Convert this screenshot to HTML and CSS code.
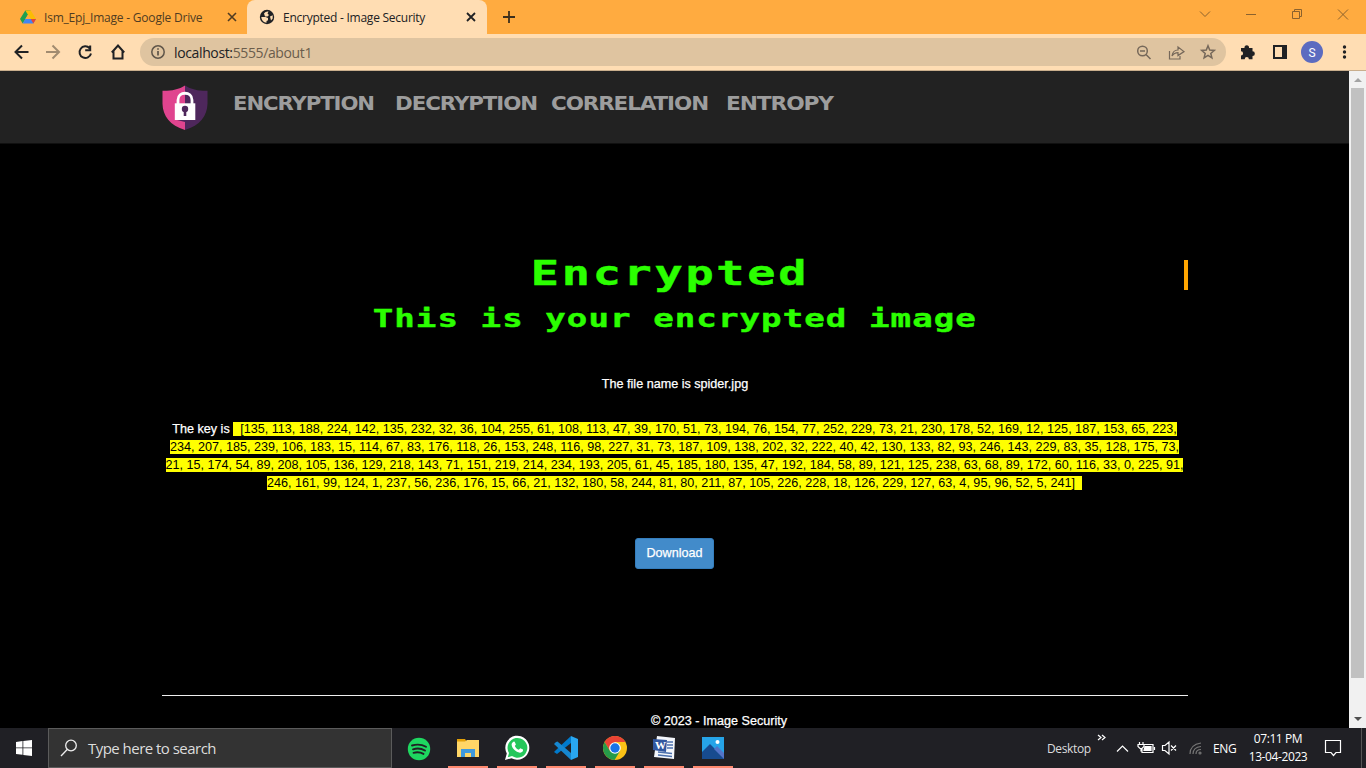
FILE: index.html
```
<!DOCTYPE html>
<html lang="en">
<head>
<meta charset="utf-8">
<title>Encrypted - Image Security</title>
<link rel="stylesheet" href="styles.css">
</head>
<body>
<div class="screen">
<header class="tabs">
  <div class="tab tab-drive">
    <svg class="fav" width="16" height="16" viewBox="0 0 16 16"><path d="M5.300 1.500h5.300L5.400 10.200 2.700 14.500 0 10z" fill="#1fa050"/><path d="M5.300 1.500h5.400L16 10h-5.300z" fill="#fbbc04"/><path d="M5.300 10H16l-2.700 4.500H2.700z" fill="#4285f4"/><path d="M10.700 10H16l-2.700 4.500z" fill="#ea4335"/><path d="M8 5.600 5.300 10h5.400z" fill="#ffab40"/></svg>
    <span class="t1">Ism_Epj_Image - Google Drive</span>
    <svg class="x" width="10" height="10" viewBox="0 0 10 10"><path d="M1 1l8 8M9 1 1 9" stroke="#503c22" stroke-width="1.6"/></svg>
  </div>
  <div class="tab tab-active">
    <svg class="fav" width="16" height="16" viewBox="0 0 16 16"><circle cx="8" cy="8" r="7.200" fill="#202124"/><path d="M5 4.500C6 3 7.500 2.300 9.500 2.500L8.500 4.500 10 6 8.500 7.500H6zM2.300 8h4.200l2.500 1v2.200l-1.500.8v1.800C4.800 13.500 2.500 11.200 2.300 8zM11 7.500l2.700-1.200v3.200L12 11.500z" fill="#ffddb3"/></svg>
    <span class="t2">Encrypted - Image Security</span>
    <svg class="x" width="10" height="10" viewBox="0 0 10 10"><path d="M1 1l8 8M9 1 1 9" stroke="#202124" stroke-width="1.8"/></svg>
  </div>
  <svg class="plus" width="12" height="12" viewBox="0 0 12 12"><path d="M6 0v12M0 6h12" stroke="#3d2f1c" stroke-width="1.8"/></svg>
  <svg class="wins" width="160" height="30" viewBox="0 0 160 30" fill="none" stroke="#8b622e"><path d="M6 9.500l5 5 5-5M52 12.500h10M98.500 9.500h7v7h-7zM100.500 9.500v-2h7v7h-2M144 7.500l10 10M154 7.500l-10 10"/></svg>
</header>
<div class="toolbar">
  <svg class="navicons" width="140" height="36" viewBox="0 0 140 36" fill="none" stroke="#202124" stroke-width="2"><path d="M28.500 18H16M22 11.500 15.500 18l6.500 6.500"/><path stroke="#a18b70" d="M46 18h12.500M52.500 11.500 59 18l-6.500 6.500"/><path d="M89.600 14.200A5.800 5.800 0 1 0 91 19.500M90.200 11.500v4.700h-5"/><path d="M107.800 18.500 114 11.600l6.200 6.900M109.500 17v7.500h9V17" transform="translate(4 0)"/></svg>
  <div class="url">
    <svg width="14" height="14" viewBox="0 0 14 14" fill="none" stroke="#5f5549"><circle cx="7" cy="7" r="6.200" stroke-width="1.500"/><path d="M7 6v4.500M7 3.300v1.500" stroke-width="1.700"/></svg>
    <span class="address"><b>localhost:</b>5555/about1</span>
    <svg class="right-icons" width="86" height="28" viewBox="0 0 86 28" fill="none" stroke="#76685a" stroke-width="1.500"><circle cx="10.500" cy="13" r="4.800"/><path d="M14 16.500l4.500 4.500M8 13h5"/><path stroke-width="1.200" d="M37.500 13v8h10.500v-3M40 18c.6-4.400 3-6 6-6V9l6 4.600-6 4v-3c-2.500 0-4.300.8-6 3.400z"/><path d="M76 7.800l1.700 4.300 4.600.3-3.500 3 1.100 4.500-3.900-2.500-3.900 2.500 1.100-4.500-3.500-3 4.600-.3z"/></svg>
  </div>
  <svg class="ext" width="140" height="36" viewBox="0 0 140 36"><path d="M15 14h3.500a2.300 2.300 0 1 1 4.500 0h3.500v3.300a2.300 2.300 0 1 1 0 4.700v3.200h-3.600a2.100 2.100 0 0 0-4.200 0H15v-3.700a2 2 0 0 0 0-4.200z" fill="#202124"/><path d="M48 12h12v12H48z" fill="#ffddb3" stroke="#202124" stroke-width="2"/><path d="M56 11h5v14h-5z" fill="#202124"/><circle cx="86" cy="18" r="11" fill="#5c6bc0"/><text x="86" y="22.500" text-anchor="middle" font-family="Roboto" font-size="12" fill="#fff">S</text><g fill="#202124"><circle cx="118.500" cy="13" r="1.700"/><circle cx="118.500" cy="18" r="1.700"/><circle cx="118.500" cy="23" r="1.700"/></g></svg>
</div>
<div class="viewport">
  <div class="page">
    <nav class="navbar">
      <svg class="shield" width="46" height="46" viewBox="0 0 46 46"><path d="M23 .5C17 4.500 9 6 .5 5.800v13C.8 31 8 40.500 23 45z" fill="#e0448f"/><path d="M23 .5c6 4 14 5.500 22.500 5.300v13C45.200 31 38 40.500 23 45z" fill="#4e275c"/><path d="M15 35l8 2v-2z" fill="#4e275c"/><path d="M16 19v-4c0-9 14-9 14 0v4" fill="none" stroke="#fff" stroke-width="2.800"/><path d="M12.800 18.300h20.500v16.700H12.800z" fill="#fff"/><circle cx="23" cy="24" r="3.200" fill="#4e275c"/><path d="M21.700 26h2.600v5h-2.600z" fill="#4e275c"/></svg>
      <svg class="links" width="610" height="30" viewBox="0 0 610 30"><text x="1" y="21" textLength="141" lengthAdjust="spacingAndGlyphs">ENCRYPTION</text><text x="163" y="21" textLength="142" lengthAdjust="spacingAndGlyphs">DECRYPTION</text><text x="319" y="21" textLength="157" lengthAdjust="spacingAndGlyphs">CORRELATION</text><text x="494" y="21" textLength="107" lengthAdjust="spacingAndGlyphs">ENTROPY</text></svg>
    </nav>
    <main class="content">
      <div class="titlebox"><h1><span>Encrypted</span></h1></div>
      <h2><span>This is your encrypted image</span></h2>
      <p class="file">The file name is spider.jpg</p>
      <p class="key"><span class="l1"><b>The key is</b> <mark>&nbsp;&nbsp;[135, 113, 188, 224, 142, 135, 232, 32, 36, 104, 255, 61, 108, 113, 47, 39, 170, 51, 73, 194, 76, 154, 77, 252, 229, 73, 21, 230, 178, 52, 169, 12, 125, 187, 153, 65, 223,</mark></span><span class="l2"><mark>234, 207, 185, 239, 106, 183, 15, 114, 67, 83, 176, 118, 26, 153, 248, 116, 98, 227, 31, 73, 187, 109, 138, 202, 32, 222, 40, 42, 130, 133, 82, 93, 246, 143, 229, 83, 35, 128, 175, 73,</mark></span><span class="l3"><mark>21, 15, 174, 54, 89, 208, 105, 136, 129, 218, 143, 71, 151, 219, 214, 234, 193, 205, 61, 45, 185, 180, 135, 47, 192, 184, 58, 89, 121, 125, 238, 63, 68, 89, 172, 60, 116, 33, 0, 225, 91,</mark></span><span class="l4"><mark>246, 161, 99, 124, 1, 237, 56, 236, 176, 15, 66, 21, 132, 180, 58, 244, 81, 80, 211, 87, 105, 226, 228, 18, 126, 229, 127, 63, 4, 95, 96, 52, 5, 241]&nbsp;&nbsp;</mark></span></p>
      <a class="btn">Download</a>
      <footer class="foot">© 2023 - Image Security</footer>
    </main>
  </div>
  <div class="scroll"><i class="up"></i><div class="thumb"></div><i class="down"></i></div>
</div>
<div class="taskbar">
  <div class="start"><svg width="16" height="16" viewBox="0 0 16 16" fill="#fff"><path d="M0 2l6.500-.9v6.400H0zM7.300 1 16 0v7.500H7.300zM0 8.300h6.500v6.500L0 14zM7.300 8.300H16V16l-8.700-1z"/></svg></div>
  <div class="search"><svg width="18" height="18" viewBox="0 0 18 18" fill="none" stroke="#eee" stroke-width="1.300"><circle cx="11" cy="6.500" r="5.300"/><path d="M7.200 10.500 1 17"/></svg><span>Type here to search</span></div>
  <div class="apps">
    <div class="app idle"><svg width="24" height="24" viewBox="0 0 24 24"><circle cx="12" cy="12" r="11.200" fill="#1ed760"/><path d="M5 8.500c5-1.500 10-1 14 1.300M6 12.300c4-1.200 8.500-.8 12 1.200M6.500 15.800c3.500-.9 7-.6 10 1.100" fill="none" stroke="#202124" stroke-width="1.900" stroke-linecap="round"/></svg></div>
    <div class="app"><svg width="24" height="24" viewBox="0 0 24 24"><path d="M1 3h8l2 3H1z" fill="#e3a008"/><path d="M1 5.500h8L11 4h12v17H1z" fill="#ffd667"/><path d="M5 21v-8h14v8h-4v-4H9v4z" fill="#3f99dc"/></svg></div>
    <div class="app"><svg width="26" height="26" viewBox="0 0 26 26"><path d="M1 25l1.800-6.500A12 12 0 1 1 7.500 23.200z" fill="#fff"/><path d="M3.800 22.200l1.200-4.200a9.900 9.900 0 1 1 3 3.100z" fill="#25c75b"/><path d="M8.800 7.200c1-1 1.800-.8 2.200.2l.9 2.200-1.100 1.500c1 2 2.300 3.100 4 3.700l1.500-1.500 2.700 1.300c.4 1.800-1.200 3.300-3.100 3.100-4-.6-8.300-4.800-8.300-8.200 0-.9.500-1.600 1.200-2.300z" fill="#fff"/></svg></div>
    <div class="app"><svg width="26" height="26" viewBox="0 0 26 26"><path d="M18 1v7L4 19l-3-2 2-2z" fill="#007acc"/><path d="M3 7l1.500-.5L18 18v7L1 9z" fill="#1687d0"/><path d="M18 1l7 3v18l-7 3z" fill="#29a7f1"/></svg></div>
    <div class="app"><svg width="24" height="24" viewBox="0 0 24 24"><circle cx="12" cy="12" r="12" fill="#fbc116"/><path d="M1.600 6a12 12 0 0 1 20.800 0H12L7 15z" fill="#ea4335"/><path d="M1.600 6a12 12 0 0 0 10 18L17 15l-5 2-5-2z" fill="#269b4a"/><circle cx="12" cy="12" r="5.800" fill="#fff"/><circle cx="12" cy="12" r="4.700" fill="#1a73e8"/></svg></div>
    <div class="app"><svg width="25" height="25" viewBox="0 0 25 25"><path d="M6 1l18 2-1 21-20-2z" fill="#f4f7fc"/><path d="M16 7h6M16 10h6M16 13h6M7 17l14 1.500M7 20l14 1.500" stroke="#4b70ad" stroke-width="1.300"/><path d="M2 4l14 1-1 12-13-2z" fill="#3157a0"/><text x="4" y="13.500" font-family="Liberation Serif" font-size="11" font-weight="700" fill="#fff">W</text></svg></div>
    <div class="app"><svg width="22" height="22" viewBox="0 0 22 22"><path d="M0 0h22v22H0z" fill="#26a4e8"/><path d="M0 15l8-8 14 14v1H0z" fill="#174b8f"/><path d="M12 12l3-3 7 7v6z" fill="#5374c8"/><circle cx="15.500" cy="5" r="2" fill="#fff"/></svg></div>
  </div>
  <span class="desk">Desktop</span>
  <svg class="tray" width="108" height="40" viewBox="0 0 108 40" fill="none" stroke="#fff" stroke-width="1.200"><path d="M2 7l3 2.500L2 12M6 7l3 2.500L6 12M21 23.500l5.500-5.500 5.500 5.500"/><path d="M48 16.500h9v8H46v-4M58.500 19v3M43.500 14v3M47 14v3M42 16.500h6v2l-2 2h-2l-2-2zM45 20.500v3"/><path d="M49 18.500h6v4h-7z" fill="#fff"/><path d="M66.500 17.500h2.500l4-3.500v12l-4-3.500h-2.500zM75 17.500l5 5M80 17.500l-5 5"/><g stroke="#777"><path d="M94 26c0-6 4-10 11-11M97 26c0-4.500 3-7 8-7.500M100 26c0-3 2-4.500 5-4.500"/><circle cx="104" cy="25" r="1"/></g></svg>
  <span class="eng">ENG</span>
  <div class="clock"><span class="time">07:11 PM</span><span class="date">13-04-2023</span></div>
  <svg class="note" width="18" height="18" viewBox="0 0 18 18" fill="none" stroke="#fff" stroke-width="1.200"><path d="M1.500 1.500h15v12H12l-2.500 3-2.500-3H1.500z"/></svg>
  <i class="edge"></i>
</div>
</div>
</body>
</html>
```
FILE: styles.css
```
* { box-sizing: border-box; }
body { margin: 0; background: #000; overflow: hidden; font-family: "Liberation Sans", sans-serif; }
svg { display: block; flex: none; }
.screen { width: 1366px; height: 768px; display: flex; flex-direction: column; }
.tabs { height: 34px; background: #ffab40; display: flex; align-items: center; font: 12px "Open Sans", sans-serif; flex: none; }
.tab { height: 34px; display: flex; align-items: center; white-space: nowrap; }
.tab-drive { width: 247px; padding: 0 10px 0 20px; color: #503c22; }
.tab-active { width: 240px; padding: 0 11px 0 12px; background: #ffddb3; color: #202124; border-radius: 8px 8px 0 0; }
.fav { margin-right: 8px; }
.x { margin-left: auto; }
.t1 { letter-spacing: -.21px; }
.t2 { letter-spacing: -.25px; }
.plus { margin-left: 16px; }
.wins { margin: 0 12px 0 auto; }
.toolbar { height: 37px; background: #ffddb3; border-bottom: 1px solid #c9ae8d; display: flex; align-items: center; flex: none; }
.url { width: 1086px; height: 28px; border-radius: 14px; background: #dfc4a0; padding-left: 11px; display: flex; align-items: center; }
.address { margin-left: 9px; font: 14px "Open Sans", sans-serif; color: #6b5d4c; letter-spacing: -.37px; }
.address b { font-weight: 400; color: #202124; }
.right-icons { margin: 0 8px 0 auto; }
.viewport { height: 657px; display: flex; flex: none; }
.page { width: 1349px; height: 657px; overflow: hidden; background: #000; }
.navbar { height: 73px; background: #222; border-bottom: 1px solid #101010; padding: 14px 0 0 162px; display: flex; }
.shield { margin-right: 24px; }
.links { margin-top: 4px; fill: #9d9d9d; font: 700 19.500px "DejaVu Sans", sans-serif; letter-spacing: -1px; }
.content { width: 1026px; margin: 116px auto 0 162px; text-align: center; color: #fff; font-size: 12.6px; }
.titlebox { height: 30px; border-right: 4px solid #ffa500; }
h1, h2 { margin: 0; font-family: "DejaVu Sans Mono", monospace; font-weight: 700; color: #2bff00; white-space: nowrap; -webkit-text-stroke: .4px #2bff00; }
h1 { font-size: 33px; line-height: 28px; padding-right: 7px; }
h2 { font-size: 24px; line-height: 28px; margin-top: 15px; }
h1 span, h2 span { display: inline-block; transform: scaleX(1.42); letter-spacing: 1.9px; }
h2 span { letter-spacing: .75px; }
.file { margin: 42px 0 0; height: 18px; line-height: 18px; -webkit-text-stroke: .25px #fff; }
.key { margin: 27px 0 0 -1px; line-height: 18px; white-space: nowrap; }
.key span { display: block; }
.key b { font-weight: 400; -webkit-text-stroke: .25px #fff; }
mark { background: #ff0; color: #000; }
.btn { display: block; width: 79px; height: 31px; margin: 46px 0 0 473px; border: 1px solid #357ebd; border-radius: 3px; background: #428bca; line-height: 28px; -webkit-text-stroke: .25px #fff; }
.foot { margin-top: 126px; border-top: 1px solid #eee; padding: 16px 0 0 88px; line-height: 18px; -webkit-text-stroke: .25px #fff; }
.scroll { width: 17px; background: #f1f1f1; display: flex; flex-direction: column; align-items: center; }
.thumb { width: 13px; height: 590px; margin-top: 6px; background: #c1c1c1; }
.up, .down { border: 4px solid transparent; border-top: 0; border-bottom-color: #a3a3a3; margin-top: 7px; }
.down { border-top: 4px solid #505050; border-bottom: 0; margin: auto 0 7px; }
.taskbar { height: 40px; background: #202025; color: #fff; display: flex; align-items: center; font: 12px "Open Sans", sans-serif; flex: none; white-space: nowrap; }
.start { width: 48px; display: flex; justify-content: center; }
.search { width: 344px; height: 40px; background: #333; border: 1px solid #5b5b5b; padding-left: 11px; display: flex; align-items: center; font-size: 15px; color: #ddd; }
.search span { margin-left: 10px; letter-spacing: -.53px; }
.apps { display: flex; margin-left: 2px; }
.app { width: 40px; height: 40px; margin: 0 4.500px; padding-top: 1px; display: flex; align-items: center; justify-content: center; border-bottom: 2px solid #ff8a70; }
.idle { border: 0; }
.desk { margin-left: 310px; width: 49px; letter-spacing: -.35px; color: #ddd; }
.tray { margin-right: 9px; }
.eng { width: 35px; letter-spacing: -.3px; }
.clock { width: 60px; display: flex; flex-direction: column; text-align: center; line-height: 18px; letter-spacing: -.4px; }
.note { margin-left: 16px; }
.edge { width: 1px; height: 40px; margin: 0 4px 0 auto; background: #555; }
```
